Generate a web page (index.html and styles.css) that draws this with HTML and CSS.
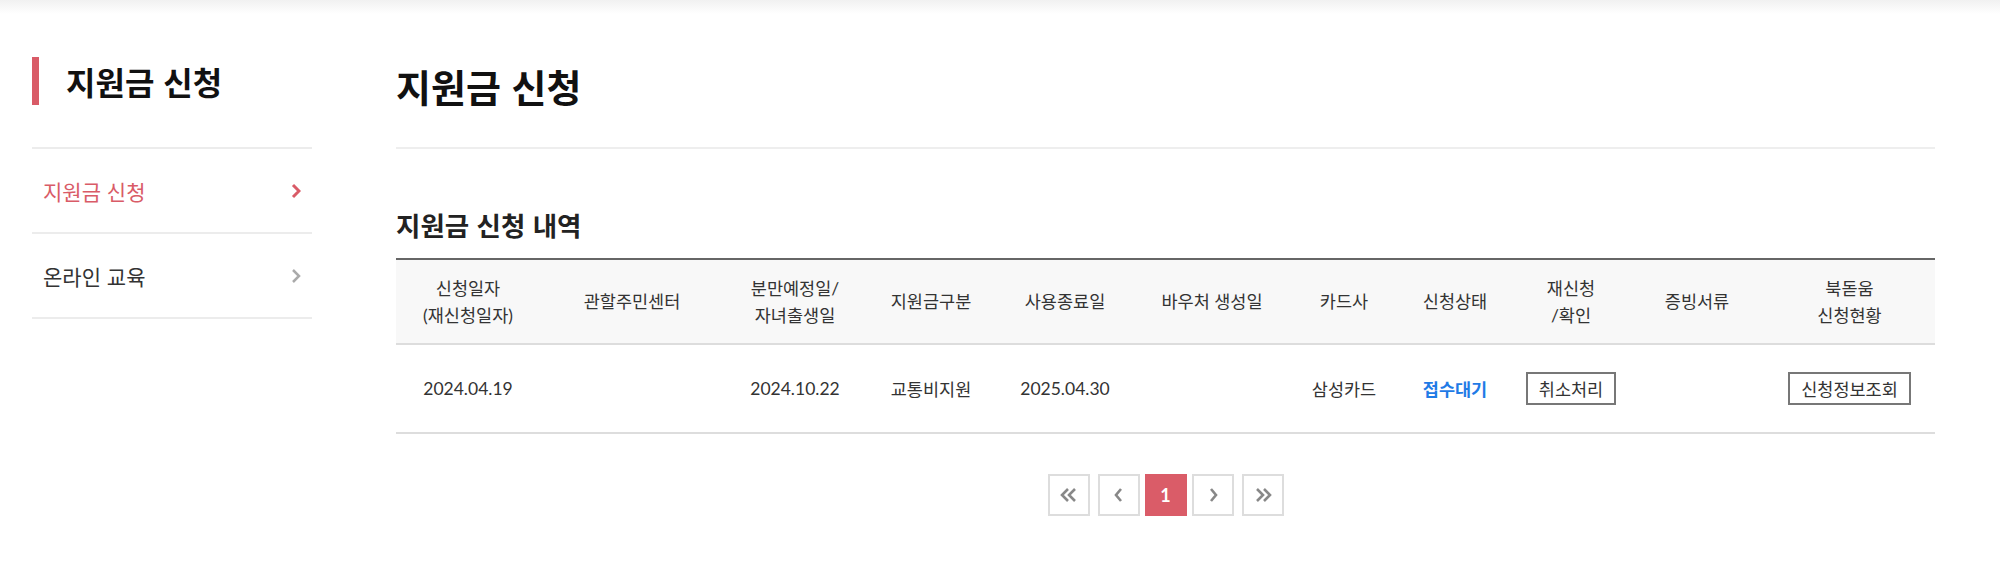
FILE: index.html
```html
<!DOCTYPE html>
<html lang="ko">
<head>
  <meta charset="UTF-8">
  <title>지원금 신청</title>
  <link rel="stylesheet" href="styles.css">
</head>
<body>
  <div class="topbar"></div>
  <div class="wrap">
    <aside class="side">
      <h2 class="side-title">지원금 신청</h2>
      <ul class="side-menu">
        <li class="on">
          <a href="#">지원금 신청</a>
          <svg class="arr" width="10" height="16" viewBox="0 0 10 16"><polyline points="2,2 8,8 2,14"/></svg>
        </li>
        <li>
          <a href="#">온라인 교육</a>
          <svg class="arr" width="10" height="16" viewBox="0 0 10 16"><polyline points="2,2 8,8 2,14"/></svg>
        </li>
      </ul>
    </aside>

    <main class="content">
      <h1 class="page-title">지원금 신청</h1>

      <h3 class="sub-title">지원금 신청 내역</h3>
      <table class="list">
        <colgroup>
          <col class="w1"><col class="w2"><col class="w3"><col class="w4"><col class="w5"><col class="w6">
          <col class="w7"><col class="w8"><col class="w9"><col class="w10"><col>
        </colgroup>
        <thead>
          <tr>
            <th>신청일자<br>(재신청일자)</th>
            <th>관할주민센터</th>
            <th>분만예정일/<br>자녀출생일</th>
            <th>지원금구분</th>
            <th>사용종료일</th>
            <th>바우처 생성일</th>
            <th>카드사</th>
            <th>신청상태</th>
            <th>재신청<br>/확인</th>
            <th>증빙서류</th>
            <th>북돋움<br>신청현황</th>
          </tr>
        </thead>
        <tbody>
          <tr>
            <td>2024.04.19</td>
            <td></td>
            <td>2024.10.22</td>
            <td>교통비지원</td>
            <td>2025.04.30</td>
            <td></td>
            <td>삼성카드</td>
            <td class="status">접수대기</td>
            <td><button class="btn">취소처리</button></td>
            <td></td>
            <td><button class="btn">신청정보조회</button></td>
          </tr>
        </tbody>
      </table>

      <div class="pager">
        <a href="#" class="pg"><svg width="18" height="14" viewBox="0 0 18 14"><polyline points="8,1 2,7 8,13"/><polyline points="15,1 9,7 15,13"/></svg></a>
        <a href="#" class="pg"><svg width="10" height="14" viewBox="0 0 10 14"><polyline points="7,1 2,7 7,13"/></svg></a>
        <a href="#" class="pg num">1</a>
        <a href="#" class="pg"><svg width="10" height="14" viewBox="0 0 10 14"><polyline points="3,1 8,7 3,13"/></svg></a>
        <a href="#" class="pg"><svg width="18" height="14" viewBox="0 0 18 14"><polyline points="3,1 9,7 3,13"/><polyline points="10,1 16,7 10,13"/></svg></a>
      </div>
    </main>
  </div>
</body>
</html>
```

FILE: styles.css
```css
body {
  margin: 0;
  font-family: Lato, "Noto Sans CJK KR", sans-serif;
  color: #333;
  background: #fff;
}
.topbar {
  height: 14px;
  background: linear-gradient(#f1f1f1, #fff);
}
.wrap {
  display: flex;
  gap: 84px;
  padding: 43px 65px 0 32px;
}
.side {
  width: 280px;
  flex-shrink: 0;
}
.side-title {
  margin: 0 0 42px;
  height: 48px;
  line-height: 48px;
  border-left: 7px solid #d95b67;
  padding-left: 27px;
  font-family: "Noto Sans CJK KR", sans-serif;
  font-size: 32px;
  font-weight: 700;
  color: #111;
}
.side-menu {
  list-style: none;
  margin: 0;
  padding: 0;
  border-top: 2px solid #ececec;
}
.side-menu li {
  display: flex;
  align-items: center;
  justify-content: space-between;
  height: 83px;
  padding: 0 11px;
  border-bottom: 2px solid #ececec;
}
.side-menu a {
  font-family: "Noto Sans CJK KR", sans-serif;
  font-size: 21px;
  color: #333;
  text-decoration: none;
}
.side-menu .arr polyline {
  fill: none;
  stroke: #aaa;
  stroke-width: 2.5;
}
.side-menu li.on a {
  color: #d95b67;
}
.side-menu li.on .arr polyline {
  stroke: #d95b67;
  stroke-width: 3;
}
.content {
  flex: 1;
}
.page-title {
  margin: 5px 0 0;
  padding-bottom: 37px;
  line-height: 48px;
  font-family: "Noto Sans CJK KR", sans-serif;
  font-size: 38px;
  font-weight: 700;
  color: #111;
  border-bottom: 2px solid #eee;
}
.sub-title {
  margin: 59px 0 16px;
  line-height: 34px;
  font-family: "Noto Sans CJK KR", sans-serif;
  font-size: 26.5px;
  font-weight: 700;
  color: #222;
}
.list {
  width: 100%;
  table-layout: fixed;
  border-collapse: collapse;
  border-top: 2px solid #666;
  font-size: 17.5px;
}
.w1 { width: 144px; }
.w2 { width: 184px; }
.w3 { width: 142px; }
.w4 { width: 130px; }
.w5 { width: 138px; }
.w6 { width: 156px; }
.w7 { width: 108px; }
.w8 { width: 114px; }
.w9 { width: 118px; }
.w10 { width: 134px; }
.list th {
  height: 83px;
  padding: 0;
  background: #f8f8f8;
  font-weight: 400;
  line-height: 27px;
  color: #333;
  border-bottom: 2px solid #ddd;
}
.list td {
  height: 87px;
  padding: 0;
  text-align: center;
  border-bottom: 2px solid #ddd;
}
.list .status {
  color: #1f7be6;
  font-weight: 700;
}
.btn {
  height: 33px;
  padding: 0 11px;
  background: #fff;
  border: 2px solid #777;
  font-family: Lato, "Noto Sans CJK KR", sans-serif;
  font-size: 17.5px;
  color: #333;
  cursor: pointer;
}
.pager {
  display: flex;
  justify-content: center;
  gap: 8px;
  margin-top: 40px;
}
.pg {
  display: flex;
  align-items: center;
  justify-content: center;
  width: 38px;
  height: 38px;
  border: 2px solid #ddd;
  text-decoration: none;
}
.pg polyline {
  fill: none;
  stroke: #888;
  stroke-width: 2.6;
}
.pg.num {
  margin: 0 -3px;
  background: #da5c68;
  border-color: #da5c68;
  color: #fff;
  font-size: 18px;
  font-weight: 700;
}
```
